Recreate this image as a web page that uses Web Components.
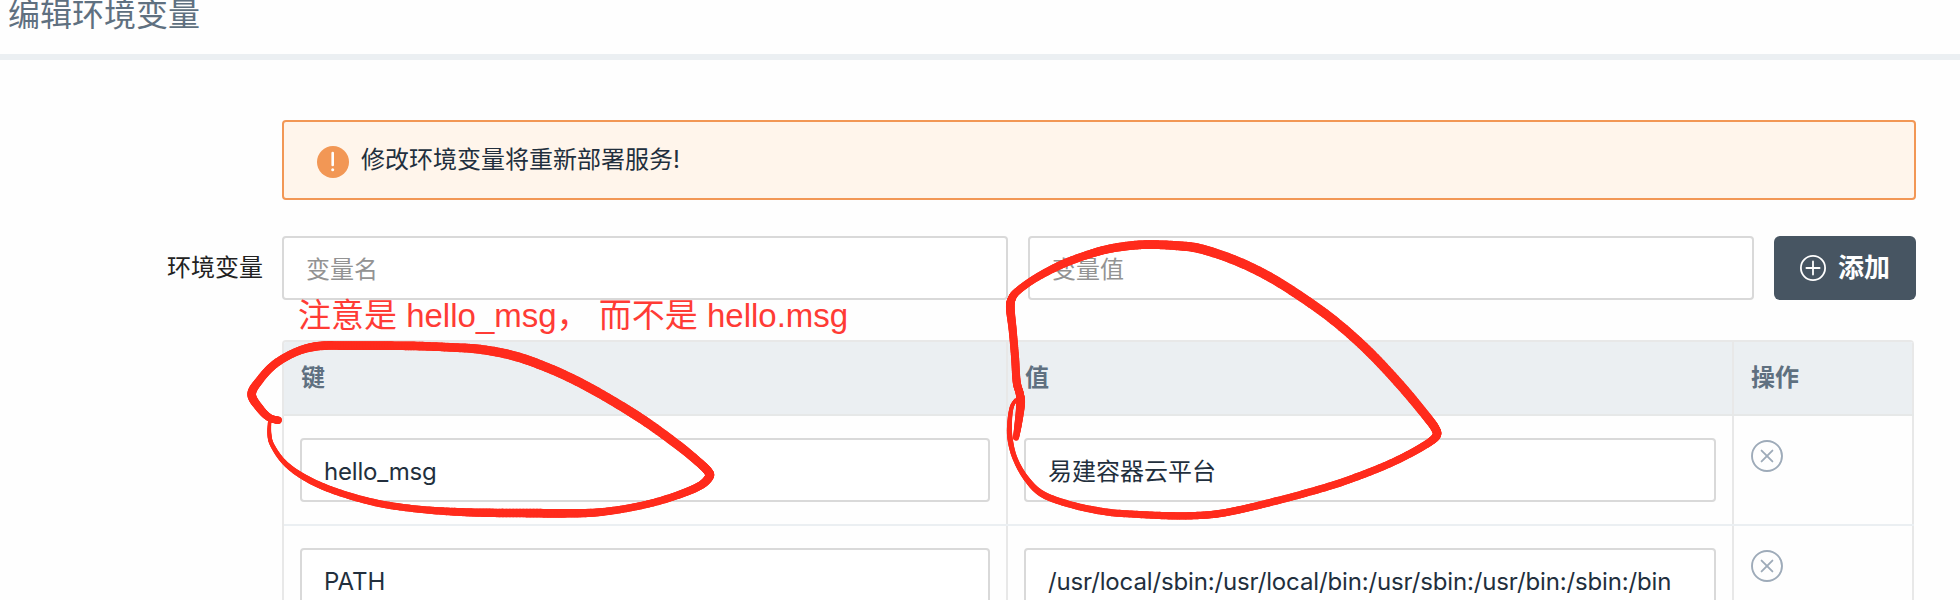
<!DOCTYPE html>
<html lang="zh-CN">
<head>
<meta charset="utf-8">
<title>编辑环境变量</title>
<style>
html,body{margin:0;background:#fefefe;overflow:hidden}
body{height:600px;font:24px/36px Inter,"Noto Sans CJK SC",sans-serif;color:#222f3d}
</style>
</head>
<body>
<env-editor></env-editor>
<script>
const define = (name, html, init) => {
  const t = document.createElement('template');
  t.innerHTML = html;
  customElements.define(name, class extends HTMLElement {
    constructor() {
      super();
      this.attachShadow({mode: 'open'}).append(t.content.cloneNode(true));
    }
    connectedCallback() { if (init) init(this.shadowRoot, this); }
  });
};

define('page-header', `
<style>
:host{display:flex;box-sizing:border-box;height:60px;border-bottom:6px solid #ebeff2;padding-left:8px;color:#5f7080;font-size:32px;line-height:32px}
span{margin-top:-1px}
</style><span><slot></slot></span>`);

define('alert-box', `
<style>
:host{display:flex;box-sizing:border-box;height:80px;border:2px solid #f29755;border-radius:4px;background:#fff5eb;padding:0 33px;align-items:center;gap:12px}
svg{flex:none;margin-top:4px}
span{line-height:36px}
</style>
<svg width="32" height="32" viewBox="0 0 32 32"><circle cx="16" cy="16" r="16" fill="#f29755"/><path d="M15.7 7v12" stroke="#fff" stroke-width="2.6" stroke-linecap="round"/><circle cx="15.7" cy="23.8" r="1.5" fill="#fff"/></svg>
<span><slot></slot></span>`);

define('text-field', `
<style>
:host{display:flex;box-sizing:border-box;height:64px;border:2px solid #d9d9d9;border-radius:4px;background:#fff;padding:4px 0 0 22px;align-items:center;white-space:nowrap;min-width:0;letter-spacing:var(--track,0)}
:host([placeholder]){color:#939393}
</style><span><slot></slot></span>`);

define('add-button', `
<style>
:host{display:flex;box-sizing:border-box;width:142px;height:64px;border-radius:6px;background:#475562;color:#fff;font-size:26px;font-weight:700;align-items:center;padding-left:26px;gap:12px}
</style>
<svg width="26" height="26" viewBox="0 0 26 26" fill="none" stroke="#fff" stroke-width="1.8"><circle cx="13" cy="13" r="12.1"/><path d="M13 6.4v13.2M6.4 13h13.2" stroke-linecap="round"/></svg>
<span><slot></slot></span>`);

define('remove-icon', `
<style>:host{display:block;width:32px;height:32px}svg{display:block}</style>
<svg width="32" height="32" viewBox="0 0 32 32" fill="none" stroke="#9eabb9" stroke-width="1.9"><circle cx="16" cy="16" r="15"/><path d="M10.6 10.6l10.8 10.8M21.4 10.6L10.6 21.4" stroke-linecap="round"/></svg>`);

define('env-row', `
<style>
:host{display:grid;grid-template-columns:724px 726px 180px;box-sizing:border-box;height:110px;border-bottom:2px solid #ebeff2}
:host([head]){height:74px;border-color:#e6e8e8;background:#ebeff2;color:#5f7080;font-weight:700}
div{box-sizing:border-box;border-right:2px solid #e8e8e8;padding:22px 16px}
:host([head]) div{padding:18px 17px}
div:last-child{padding-top:24px;padding-left:17px}
:host([head]) div:last-child{padding-top:18px;padding-left:17px}
</style>
<div><slot name="key"></slot></div><div><slot name="value"></slot></div><div><slot name="action"></slot></div>`);

define('env-table', `
<style>
:host{display:block;box-sizing:border-box;width:1632px;border:2px solid #e8e8e8;border-right:0;border-radius:4px 4px 0 0;overflow:hidden}
</style><slot></slot>`);

define('red-note', `
<style>
:host{display:block;position:absolute;left:298px;top:296px;font-family:"Liberation Sans","Noto Sans CJK SC",sans-serif;font-size:33px;line-height:40px;color:#ff3b35;z-index:2}
span{white-space:pre}
</style><span><slot></slot></span>`);

// Hand-drawn loops: each point is x, y and pen width; smoothed with a Catmull-Rom spline.
define('ink-layer', `
<style>:host{position:absolute;inset:0;z-index:3;pointer-events:none}svg{display:block}</style>
<svg width="1960" height="600" fill="none"></svg>`, root => {
  const loops = [
    {o: [240, 300], p: [[115,361,22],[88,353,22],[60,326,24],[35,283,26],[60,239,24],[105,192,24],[170,155,24],[238,138,26],[330,137,26],[430,137,26],[530,138,26],[630,142,26],[720,148,27],[820,167,28],[920,202,28],[1020,248,28],[1120,304,28],[1220,367,28],[1320,440,27],[1380,490,26],[1404,514,26],[1408,530,26],[1382,556,24],[1320,583,23],[1240,608,22],[1150,627,22],[1060,638,24],[960,640,26],[840,639,26],[720,638,25],[620,634,23],[530,627,21],[430,613,21],[340,591,20],[250,560,20],[180,524,18],[130,484,15],[96,434,13],[88,400,12],[89,363,10]]},
    {o: [960, 220], p: [[168,653,18],[175,610,22],[182,550,26],[179,520,24],[170,485,24],[165,410,24],[158,330,24],[151,265,26],[155,237,24],[172,214,22],[226,175,22],[304,134,24],[384,104,24],[450,86,25],[520,76,26],[580,74,26],[650,77,27],[720,86,28],[820,119,28],[920,166,28],[1020,228,28],[1120,300,28],[1220,388,28],[1320,494,28],[1400,590,27],[1426,626,26],[1430,646,25],[1408,667,23],[1350,701,22],[1280,735,22],[1200,767,22],[1120,795,22],[1020,824,22],[920,850,22],[840,869,22],[770,882,22],[700,887,22],[620,887,22],[530,883,21],[440,876,21],[340,856,20],[250,824,20],[200,777,17],[165,715,15],[150,655,16],[149,605,14],[155,562,12],[167,540,10]]}
  ];
  const cr = (a, b, c, d, t) => 0.5 * (2*b + (c-a)*t + (2*a-5*b+4*c-d)*t*t + (3*b-a-3*c+d)*t*t*t);
  let out = '';
  for (const {o, p} of loops) {
    const pts = [];
    for (let i = 0; i < p.length - 1; i++) {
      const q = [p[Math.max(0, i-1)], p[i], p[i+1], p[Math.min(p.length-1, i+2)]];
      for (let s = 0; s < 12; s++) pts.push([0,1,2].map(k => cr(q[0][k], q[1][k], q[2][k], q[3][k], s/12) / 3));
    }
    pts.push(p[p.length-1].map(v => v / 3));
    for (let i = 1; i < pts.length; i++) {
      const [a, b] = [pts[i-1], pts[i]];
      out += `<path d="M${(a[0]+o[0]).toFixed(2)} ${(a[1]+o[1]).toFixed(2)}L${(b[0]+o[0]).toFixed(2)} ${(b[1]+o[1]).toFixed(2)}" stroke="#ff2b1c" stroke-width="${b[2].toFixed(2)}" stroke-linecap="round"/>`;
    }
  }
  root.querySelector('svg').innerHTML = out;
});

define('env-editor', `
<style>
:host{display:block;position:relative;height:600px;overflow:hidden}
main{padding:60px 44px 0 282px}
.form{position:relative;display:grid;grid-template-columns:726px 726px 142px;gap:20px;margin:36px 0 40px}
.label{position:absolute;right:calc(100% + 19px);top:14px;color:#222;white-space:nowrap}
</style>
<page-header>编辑环境变量</page-header>
<main>
  <alert-box>修改环境变量将重新部署服务!</alert-box>
  <div class="form">
    <span class="label">环境变量</span>
    <text-field placeholder>变量名</text-field>
    <text-field placeholder>变量值</text-field>
    <add-button>添加</add-button>
  </div>
  <env-table>
    <env-row head><span slot="key">键</span><span slot="value">值</span><span slot="action">操作</span></env-row>
    <env-row><text-field slot="key" style="--track:-.2px">hello_msg</text-field><text-field slot="value">易建容器云平台</text-field><remove-icon slot="action"></remove-icon></env-row>
    <env-row><text-field slot="key" style="--track:0px">PATH</text-field><text-field slot="value" style="--track:-.14px">/usr/local/sbin:/usr/local/bin:/usr/sbin:/usr/bin:/sbin:/bin</text-field><remove-icon slot="action"></remove-icon></env-row>
  </env-table>
</main>
<red-note>注意是 hello_msg， 而不是 hello.msg</red-note>
<ink-layer></ink-layer>`);
</script>
</body>
</html>
